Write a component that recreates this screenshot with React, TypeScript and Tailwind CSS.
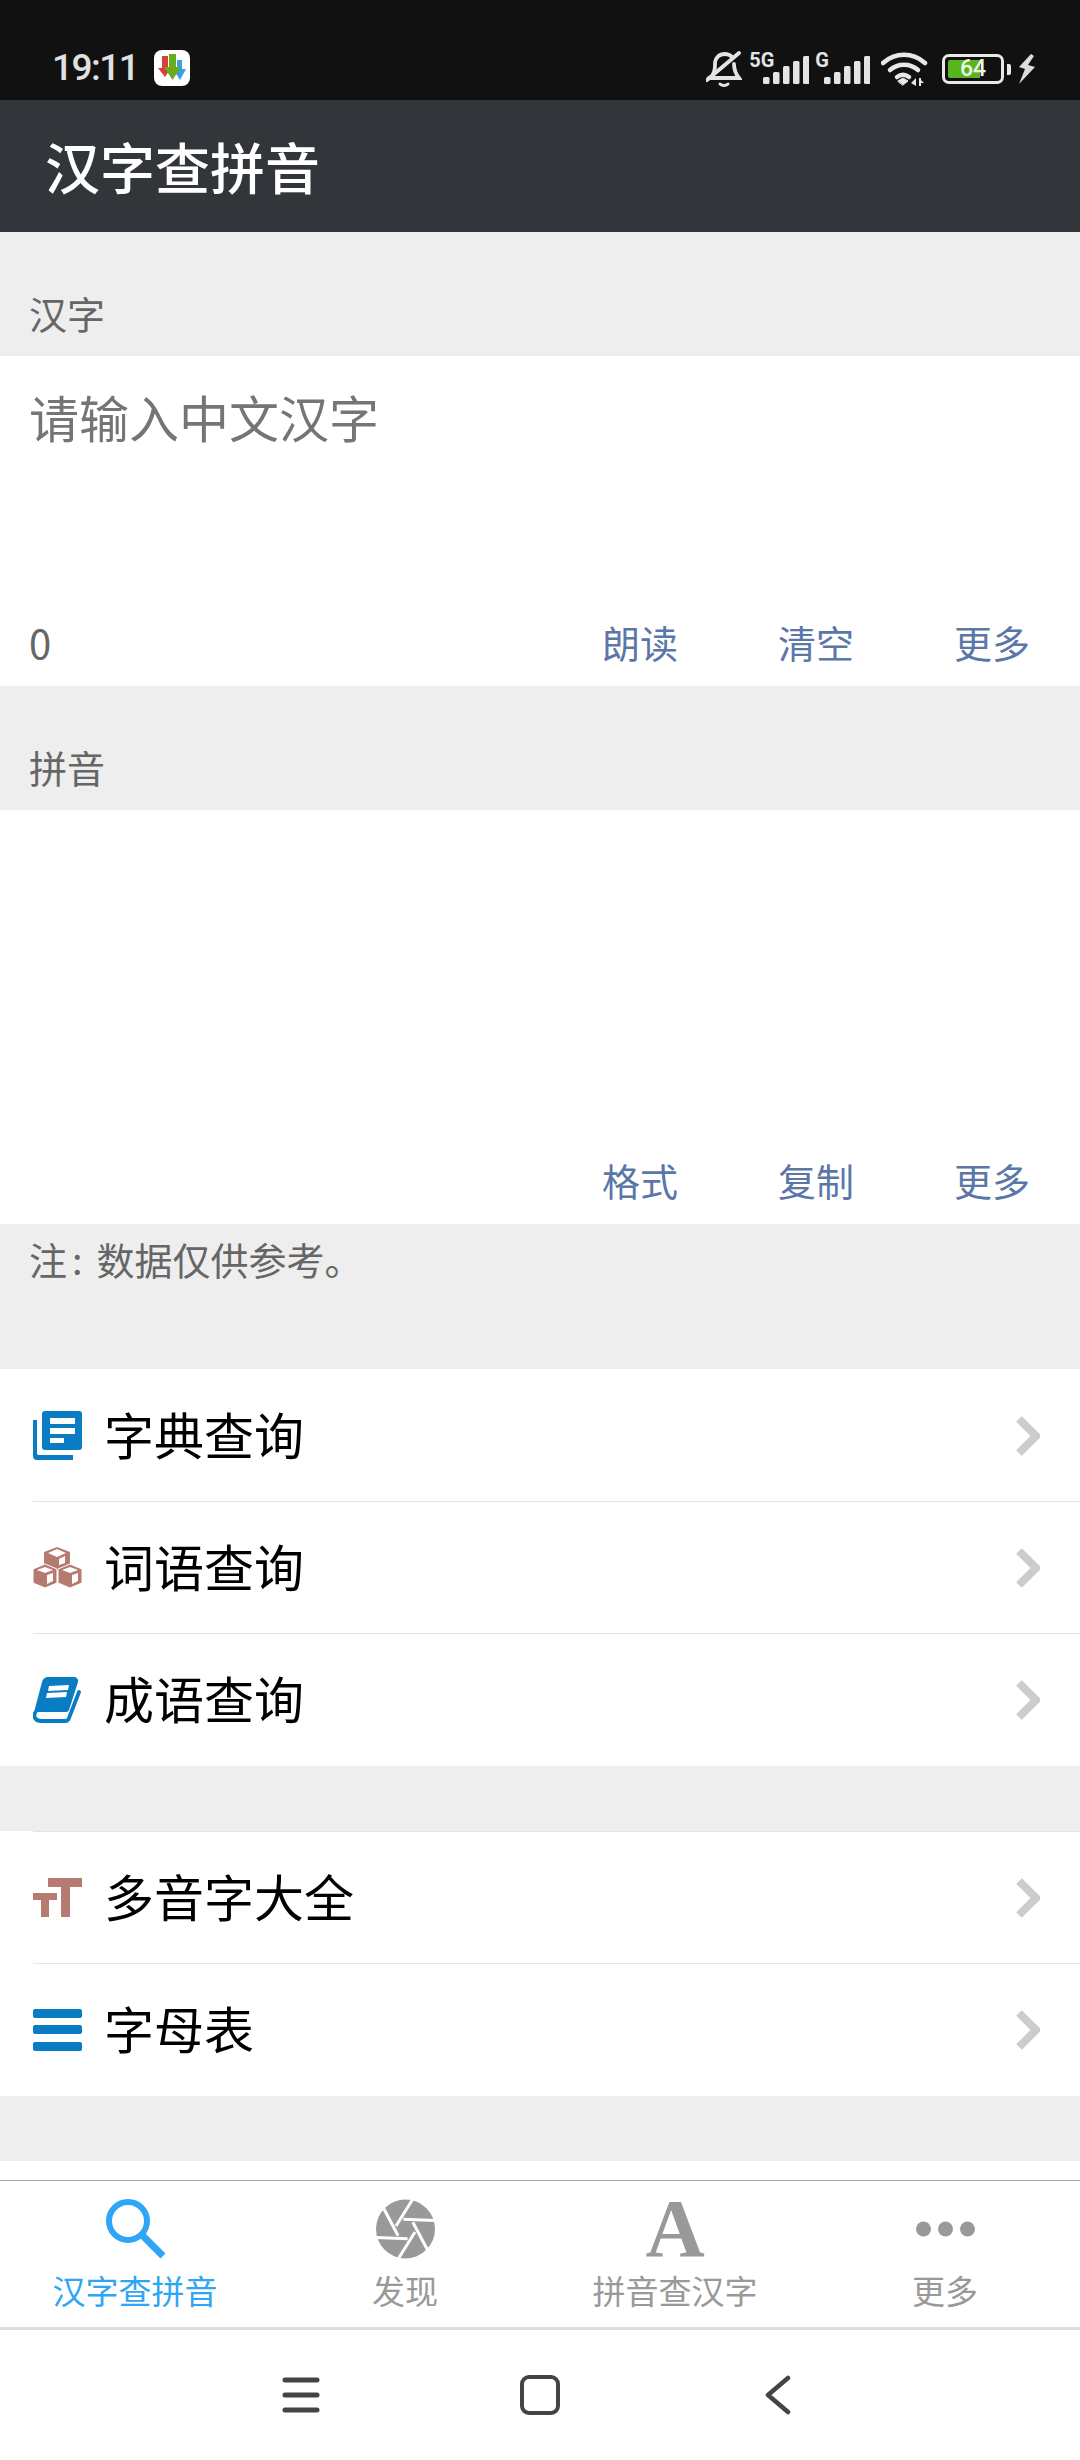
// 汉字查拼音 — écran principal : saisie, résultat, listes et barre d'onglets.
import type { ReactNode } from "react";

const CJK = "font-['Noto_Sans_CJK_SC','Noto_Sans',sans-serif]";

// --- Icônes de la barre d'état ---
function BellOff() {
  return (
    <svg width="36" height="38" viewBox="0 0 36 38" fill="none" stroke="#e4e4e4" strokeWidth="3.8" strokeLinecap="round" className="mr-[7px]">
      <path d="M7 24c2-3 2-6 2-10 0-6 4-10 10-10 3 0 5 1 7 3M28 14c0 4 1 9 5 14H3" />
      <path d="M1 30L33 3" />
      <path d="M14 34c2 2 6 2 8 0" strokeWidth="3" />
    </svg>
  );
}

function Signal({ label, barsOverlap }: { label: string; barsOverlap: string }) {
  const heights = [7, 12, 18, 23, 28];
  return (
    <div className="flex items-start">
      <span className={`text-[20px] font-bold leading-[16px] text-[#e4e4e4] font-['Roboto',sans-serif] ${barsOverlap}`}>
        {label}
      </span>
      <svg width="46" height="34" viewBox="0 0 46 34">
        {heights.map((h, i) => (
          <rect key={i} x={i * 10} y={32 - h} width="6.500" height={h} rx="1.5" fill="#e4e4e4" />
        ))}
      </svg>
    </div>
  );
}

function Wifi() {
  return (
    <svg width="47" height="34" viewBox="0 0 47 34" fill="none" stroke="#e8e8e8" strokeWidth="4.500" strokeLinecap="round" className="ml-[11px] mr-[14px]">
      <path d="M2 11c12-11 30-11 42 0" />
      <path d="M9 18c8-7 20-7 28 0" />
      <path d="M16 25c4-3 8-3 12 0" />
      <path d="M17 29l5-3 5 3-5 4z" fill="#e8e8e8" strokeWidth="1" />
      <path d="M30 31l5-5v8zM38 26h2v8h-2zM38 26l5 5h-5z" fill="#e8e8e8" stroke="none" />
    </svg>
  );
}

function Battery() {
  return (
    <div className="flex items-center">
      <div className="relative h-[30px] w-[62px] rounded-[7px] border-[3px] border-[#e8e8e8] p-[3px]">
        <div className="h-full w-[32px] rounded-l-[2px] bg-[#57b51d]" />
        <span className="absolute inset-0 text-center text-[23px] font-medium leading-[24px] text-[#eef5e6] font-['Roboto',sans-serif]">
          64
        </span>
      </div>
      <div className="ml-[3px] h-[11px] w-[4px] rounded-r-[2px] bg-[#e8e8e8]" />
    </div>
  );
}

function Bolt() {
  return (
    <svg width="18" height="30" viewBox="0 0 18 30" className="ml-[7px]">
      <path d="M13 0L1 13l6 2-6 15 16-17-7-2 6-9-3-2z" fill="#dcdcdc" />
    </svg>
  );
}

function AppNotif() {
  return (
    <div className="ml-[16px] flex h-[36px] w-[36px] items-center justify-center rounded-[8px] bg-white">
      <svg width="30" height="28" viewBox="0 0 30 28">
        <path d="M5 2h6v12h3l-6 9-7-9h4z" fill="#d9403a" />
        <path d="M20 6h5v9h4l-6 11-7-11h4z" fill="#3b9fe8" />
        <path d="M12 0h7v13h5L15.500 26 7 13h5z" fill="#6aaa1c" />
      </svg>
    </div>
  );
}

function StatusBar() {
  return (
    <div className="flex h-[100px] shrink-0 items-start bg-[#111111] pl-[52px] pr-[44px] pt-[50px]">
      <span className="text-[37px] font-medium leading-[36px] tracking-[-1.5px] text-[#e0e0e0] font-['Roboto',sans-serif]">
        19:11
      </span>
      <AppNotif />
      <div className="ml-auto flex items-center">
        <BellOff />
        <Signal label="5G" barsOverlap="-mr-[11px]" />
        <Signal label="G" barsOverlap="-mr-[5px] ml-[6px]" />
        <Wifi />
        <Battery />
        <Bolt />
      </div>
    </div>
  );
}

// --- Zone de saisie ---
function Label({ children }: { children: ReactNode }) {
  return (
    <div className="flex h-[124px] shrink-0 items-end bg-[#eeeeee] pb-[1px] pl-[29px] text-[38px] leading-[84px] text-[#666666]">
      {children}
    </div>
  );
}

function Actions({ items, count }: { items: string[]; count?: string }) {
  return (
    <div className="flex h-[82px] shrink-0 items-center pb-[7px]">
      {count && <span className="pl-[29px] text-[40px] leading-[50px] text-[#666666]">{count}</span>}
      <div className="ml-auto flex">
        {items.map((item) => (
          <span key={item} className="w-[176px] text-center text-[38px] leading-[75px] text-[#5b77a8]">
            {item}
          </span>
        ))}
      </div>
    </div>
  );
}

// --- Icônes des listes ---
const BLUE = "#0a7cc4";
const BROWN = "#b57b70";

function DictIcon() {
  return (
    <svg width="49" height="49" viewBox="0 0 49 49">
      <path d="M0 9h4v34a2 2 0 0 0 2 1h34v5H4a4 4 0 0 1-4-4z" fill={BLUE} />
      <rect x="9" y="0" width="40" height="39" rx="3" fill={BLUE} />
      <path d="M17 7h25v6H17zM17 17h25v6H17zM17 27h14v5H17z" fill="#fff" />
    </svg>
  );
}

function BlocksIcon() {
  return (
    <svg width="49" height="41" viewBox="0 0 49 41">
      <path d="M24 0l13 5v14l-13 5-13-5V5z" fill={BROWN} />
      <path d="M12 17l12 5v14l-12 5L0 36V22z" fill={BROWN} stroke="#fff" strokeWidth="1" />
      <path d="M37 17l12 5v14l-12 5-12-5V22z" fill={BROWN} stroke="#fff" strokeWidth="1" />
      <path d="M15 6l9-4 9 4-9 4zM4 23l8-3 8 3-8 3zM29 23l8-3 8 3-8 3z" fill="#fff" />
      <path d="M14 28l6-2v8l-6 3zM39 28l6-2v8l-6 3z" fill="#fff" />
      <path d="M26 12l6-3v7l-6 2z" fill="#fff" />
    </svg>
  );
}

function BookIcon() {
  return (
    <svg width="49" height="46" viewBox="0 0 49 46">
      <path d="M14 0H41a4 4 0 0 1 4 5L36 33a3 3 0 0 1-3 2H8c-4 0-7 1-8 4L9 5a7 7 0 0 1 5-5z" fill={BLUE} />
      <path d="M2 36c-2 4 1 8 6 8H32a4 4 0 0 0 4-3L46 15" fill="none" stroke={BLUE} strokeWidth="3.800" strokeLinecap="round" />
      <path d="M16 9l20-1-1 5-20 1zM14 16l20-1-1 5-20 1z" fill="#fff" />
    </svg>
  );
}

function FontSizeIcon() {
  return (
    <svg width="49" height="39" viewBox="0 0 49 39">
      <path d="M15 0h34v9H37v30H28V9H15z" fill={BROWN} />
      <path d="M0 15h24v7h-8v17H8V22H0z" fill={BROWN} />
    </svg>
  );
}

function LinesIcon() {
  return (
    <svg width="49" height="42" viewBox="0 0 49 42">
      <rect y="0" width="49" height="9" rx="2" fill={BLUE} />
      <rect y="16" width="49" height="9" rx="2" fill={BLUE} />
      <rect y="33" width="49" height="9" rx="2" fill={BLUE} />
    </svg>
  );
}

function Chevron() {
  return (
    <svg width="24" height="40" viewBox="0 0 24 40" fill="none" stroke="#cccccc" strokeWidth="8">
      <path d="M3 3l17 17L3 37" />
    </svg>
  );
}

function Row({ icon, title, last }: { icon: ReactNode; title: string; last?: boolean }) {
  return (
    <div className="pl-[33px]">
      <div className={`box-content flex items-center ${last ? "h-[132px]" : "h-[131px] border-b border-[#e4e4e4]"}`}>
        <div className="flex w-[49px] shrink-0 justify-center">{icon}</div>
        <span className="mb-[6px] ml-[22px] text-[50px] leading-[60px] text-black">{title}</span>
        <div className="ml-auto mr-[40px] flex">
          <Chevron />
        </div>
      </div>
    </div>
  );
}

// --- Onglets ---
function SearchIcon() {
  return (
    <svg width="59" height="60" viewBox="0 0 59 60" fill="none" stroke="#2fa6f5">
      <circle cx="22" cy="22" r="19" strokeWidth="6" />
      <path d="M37 37l20 20" strokeWidth="7" />
    </svg>
  );
}

function ApertureIcon() {
  return (
    <svg width="59" height="60" viewBox="-29.500 -30 59 60">
      <circle r="29.500" fill="#999999" />
      {[0, 60, 120, 180, 240, 300].map((a) => (
        <line key={a} x1="8" y1="-31" x2="-9.500" y2="-3" stroke="#fff" strokeWidth="3" transform={`rotate(${a})`} />
      ))}
    </svg>
  );
}

// Le « A » de l'onglet : une vraie lettre serif, pas un tracé.
function LetterIcon() {
  return (
    <div className="flex h-[60px] w-[59px] justify-center overflow-visible whitespace-nowrap text-[82px] font-bold leading-[60px] text-[#999999] font-['Liberation_Serif',serif]">
      A
    </div>
  );
}

function DotsIcon() {
  return (
    <svg width="59" height="60" viewBox="0 0 59 60" fill="#999999">
      <circle cx="7.500" cy="30" r="7.500" />
      <circle cx="29.500" cy="30" r="7.500" />
      <circle cx="51.500" cy="30" r="7.500" />
    </svg>
  );
}

function Tab({ icon, label, active }: { icon: ReactNode; label: string; active?: boolean }) {
  return (
    <div className="flex flex-1 flex-col items-center pt-[18px]">
      {icon}
      <span className={`mt-[11px] text-[33px] leading-[40px] ${active ? "text-[#2fa6f5]" : "text-[#999999]"}`}>
        {label}
      </span>
    </div>
  );
}

function NavBar() {
  return (
    <div className="flex h-[130px] shrink-0 items-center justify-center bg-white">
      <div className="flex w-[238px] justify-center">
        <svg width="38" height="36" viewBox="0 0 38 36" stroke="#444444" strokeWidth="5" strokeLinecap="round" className="mr-[2px]">
          <path d="M3 3h32M3 18h32M3 33h32" />
        </svg>
      </div>
      <div className="flex w-[238px] justify-center">
        <div className="h-[40px] w-[40px] rounded-[9px] border-[4px] border-[#444444]" />
      </div>
      <div className="flex w-[238px] justify-center">
        <svg width="26" height="40" viewBox="0 0 26 40" fill="none" stroke="#444444" strokeWidth="4.500" strokeLinecap="round" strokeLinejoin="round">
          <path d="M23 3L3 20l20 17" />
        </svg>
      </div>
    </div>
  );
}

export default function App() {
  return (
    <div className={`flex h-[2460px] w-[1080px] flex-col overflow-hidden bg-white ${CJK}`}>
      <StatusBar />
      <div className="flex h-[132px] shrink-0 items-center bg-[#32363a] pb-[2px] pl-[45px] text-[55px] font-medium leading-[64px] text-white">
        汉字查拼音
      </div>

      <Label>汉字</Label>
      <div className="flex h-[330px] shrink-0 flex-col bg-white">
        <div className="flex-1 pl-[29px] pt-[30px] text-[50px] leading-[60px] text-[#757575]">请输入中文汉字</div>
        <Actions count="0" items={["朗读", "清空", "更多"]} />
      </div>

      <Label>拼音</Label>
      <div className="flex h-[414px] shrink-0 flex-col justify-end bg-white">
        <Actions items={["格式", "复制", "更多"]} />
      </div>

      <div className="h-[145px] shrink-0 bg-[#eeeeee] pl-[29px] pt-[11px] text-[38px] leading-[48px] text-[#666666]">
        注<span className="ml-[5px] mr-[14px]">:</span>数据仅供参考。
      </div>

      <div className="shrink-0 bg-white pt-[1px]">
        <Row icon={<DictIcon />} title="字典查询" />
        <Row icon={<BlocksIcon />} title="词语查询" />
        <Row icon={<BookIcon />} title="成语查询" last />
      </div>

      <div className="h-[65px] shrink-0 bg-[#eeeeee]" />

      <div className="shrink-0 bg-white">
        <div className="ml-[33px] border-t border-[#e4e4e4]" />
        <Row icon={<FontSizeIcon />} title="多音字大全" />
        <Row icon={<LinesIcon />} title="字母表" last />
      </div>

      <div className="h-[65px] shrink-0 bg-[#eeeeee]" />
      <div className="h-[19px] shrink-0 bg-white" />

      <div className="flex h-[150px] shrink-0 border-b-[3px] border-t border-b-[#dddddd] border-t-[#aaaaaa] bg-white">
        <Tab icon={<SearchIcon />} label="汉字查拼音" active />
        <Tab icon={<ApertureIcon />} label="发现" />
        <Tab icon={<LetterIcon />} label="拼音查汉字" />
        <Tab icon={<DotsIcon />} label="更多" />
      </div>

      <NavBar />
    </div>
  );
}
